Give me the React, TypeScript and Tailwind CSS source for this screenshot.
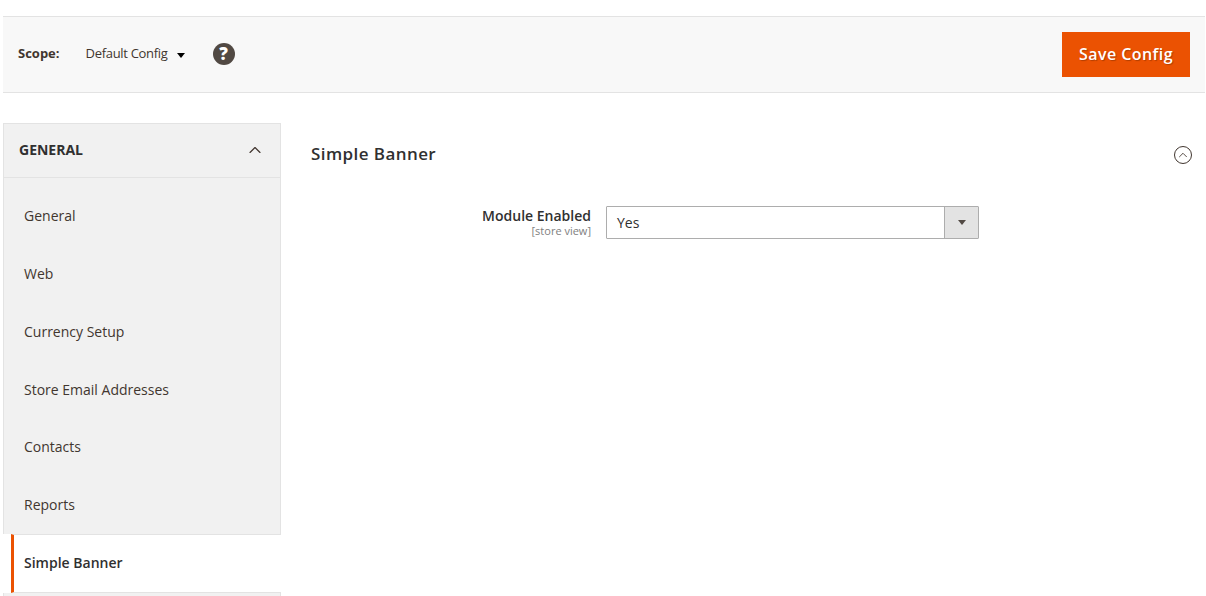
import { ChevronUp } from "lucide-react";

const items = ["General", "Web", "Currency Setup", "Store Email Addresses", "Contacts", "Reports"];

export default function App() {
  return (
    <div className="h-[596px] w-[1206px] overflow-hidden bg-white pl-[3px] pt-4 font-['Open_Sans',sans-serif] text-[#303030]">
      {/* Scope bar */}
      <div className="mr-px flex h-[77px] items-center justify-between border-y border-[#e3e3e3] bg-[#f8f8f8] pl-[15px] pr-[15px]">
        <div className="-mt-[2px] flex items-center">
          <span className="text-[13px] font-bold text-[#41362f]">Scope:</span>
          <span className="ml-[26px] text-[13px] tracking-[-0.3px] text-[#41362f]">Default Config</span>
          <span className="ml-[9px] mt-[3px] h-0 w-0 border-x-[4.5px] border-t-[5px] border-x-transparent border-t-black" />
          <span className="ml-[28px] flex h-[22px] w-[22px] items-center justify-center rounded-full bg-[#514943] text-[17px] font-extrabold text-white">
            ?
          </span>
        </div>
        <button className="h-[45px] w-[128px] bg-[#eb5202] pb-[2px] text-[16px] font-semibold tracking-[0.45px] text-white [text-shadow:1px_1px_1px_rgba(0,0,0,0.25)]">
          Save Config
        </button>
      </div>

      <div className="mt-[30px] flex">
        {/* Sidebar */}
        <div className="w-[278px] shrink-0">
          <div className="border-x border-[#e3e3e3] bg-[#f1f1f1] pb-px">
            <div className="flex h-[55px] items-center justify-between border-y border-[#e3e3e3] pb-[2px] pl-[15px] pr-[17px]">
              <span className="text-[14px] font-bold text-[#303030]">GENERAL</span>
              <ChevronUp className="mr-[-2px] h-[20px] w-[20px] text-[#41362f]" strokeWidth={1.4} />
            </div>
            <div className="pt-[9px]">
              {items.map((item, i) => (
                <div
                  key={item}
                  className={
                    i === 3
                      ? "flex h-[57.7px] items-center pl-5 pt-px text-[14px] text-[#41362f]"
                      : "flex h-[57.7px] items-center pl-5 text-[14px] text-[#41362f]"
                  }
                >
                  {item}
                </div>
              ))}
            </div>
          </div>
          <div className="ml-2 flex h-[59px] items-center border-y border-[#e3e3e3] border-l-[3px] border-l-[#eb5202] bg-white pb-[2px] pl-[10px] text-[14px] font-[580] text-[#303030]">
            Simple Banner
          </div>
          <div className="h-[10px] border-x border-[#e3e3e3] bg-[#f1f1f1]" />
        </div>

        {/* Main */}
        <div className="flex-1 pl-[30px] pr-[14px]">
          <div className="flex items-center justify-between pt-[18px]">
            <span className="text-[17px] font-semibold tracking-[0.42px] text-[#303030]">Simple Banner</span>
            <span className="mt-[2px] flex h-[18px] w-[18px] items-center justify-center rounded-full border border-[#41362f]">
              <ChevronUp className="h-[14px] w-[14px] text-[#41362f]" strokeWidth={1.5} />
            </span>
          </div>
          <div className="mt-[39px] flex">
            <div className="w-[280px] text-right">
              <div className="pt-[1px] text-[14px] font-[580] leading-[18px] text-[#303030]">Module Enabled</div>
              <div className="text-[11px] leading-[12px] text-[#808080]">[store view]</div>
            </div>
            <div className="ml-[15px] flex h-[33px] w-[373px] items-stretch rounded-[1px] border border-[#adadad] bg-white">
              <span className="flex flex-1 items-center pl-[10px] text-[14px] text-[#303030]">Yes</span>
              <span className="flex w-[34px] items-center justify-center border-l border-[#adadad] bg-[#e3e3e3]">
                <span className="h-0 w-0 border-x-[4px] border-t-[5px] border-x-transparent border-t-[#514943]" />
              </span>
            </div>
          </div>
        </div>
      </div>
    </div>
  );
}
